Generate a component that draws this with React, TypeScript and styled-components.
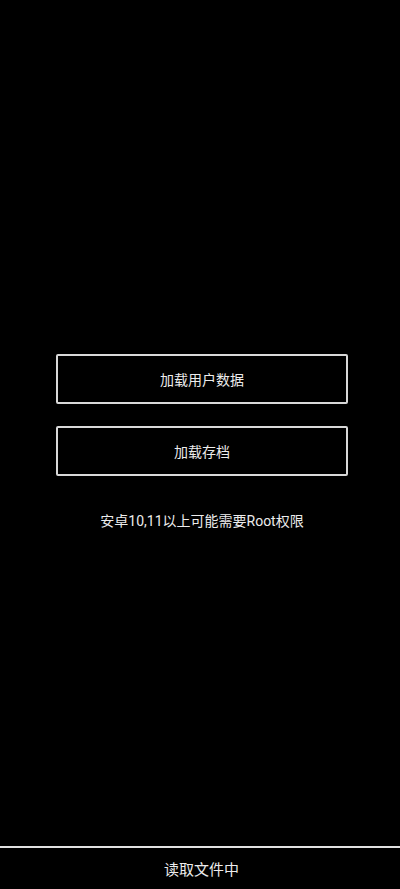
import styled, { createGlobalStyle } from "styled-components";

const GlobalStyle = createGlobalStyle`
  html, body {
    margin: 0;
    padding: 0;
    background: #000;
  }
  body {
    font-family: "Roboto", "Noto Sans CJK SC", sans-serif;
    color: #ececec;
  }
`;

const Screen = styled.div`
  height: 889px;
  display: flex;
  flex-direction: column;
  background: #000;
`;

const Main = styled.div`
  flex: 1;
  display: flex;
  flex-direction: column;
  align-items: stretch;
  padding: 354px 52px 0 56px;
`;

const ActionButton = styled.button`
  height: 50px;
  margin-bottom: ${(p: { $gap?: number }) => p.$gap ?? 22}px;
  background: transparent;
  border: 2px solid #d8d8d8;
  border-radius: 2px;
  color: #ececec;
  font-family: "Roboto", "Noto Sans CJK SC", sans-serif;
  font-size: 14px;
  cursor: pointer;
`;

const Note = styled.p`
  margin: 0;
  text-align: center;
  font-size: 14px;
  line-height: 20px;
`;

const StatusBar = styled.div`
  height: 41px;
  border-top: 2px solid #e0e0e0;
  display: flex;
  align-items: center;
  justify-content: center;
  padding-left: 3px;
  font-size: 15px;
`;

export default function App() {
  return (
    <>
      <GlobalStyle />
      <Screen>
        <Main>
          <ActionButton>加载用户数据</ActionButton>
          <ActionButton $gap={35}>加载存档</ActionButton>
          <Note>安卓10,11以上可能需要Root权限</Note>
        </Main>
        <StatusBar>读取文件中</StatusBar>
      </Screen>
    </>
  );
}
